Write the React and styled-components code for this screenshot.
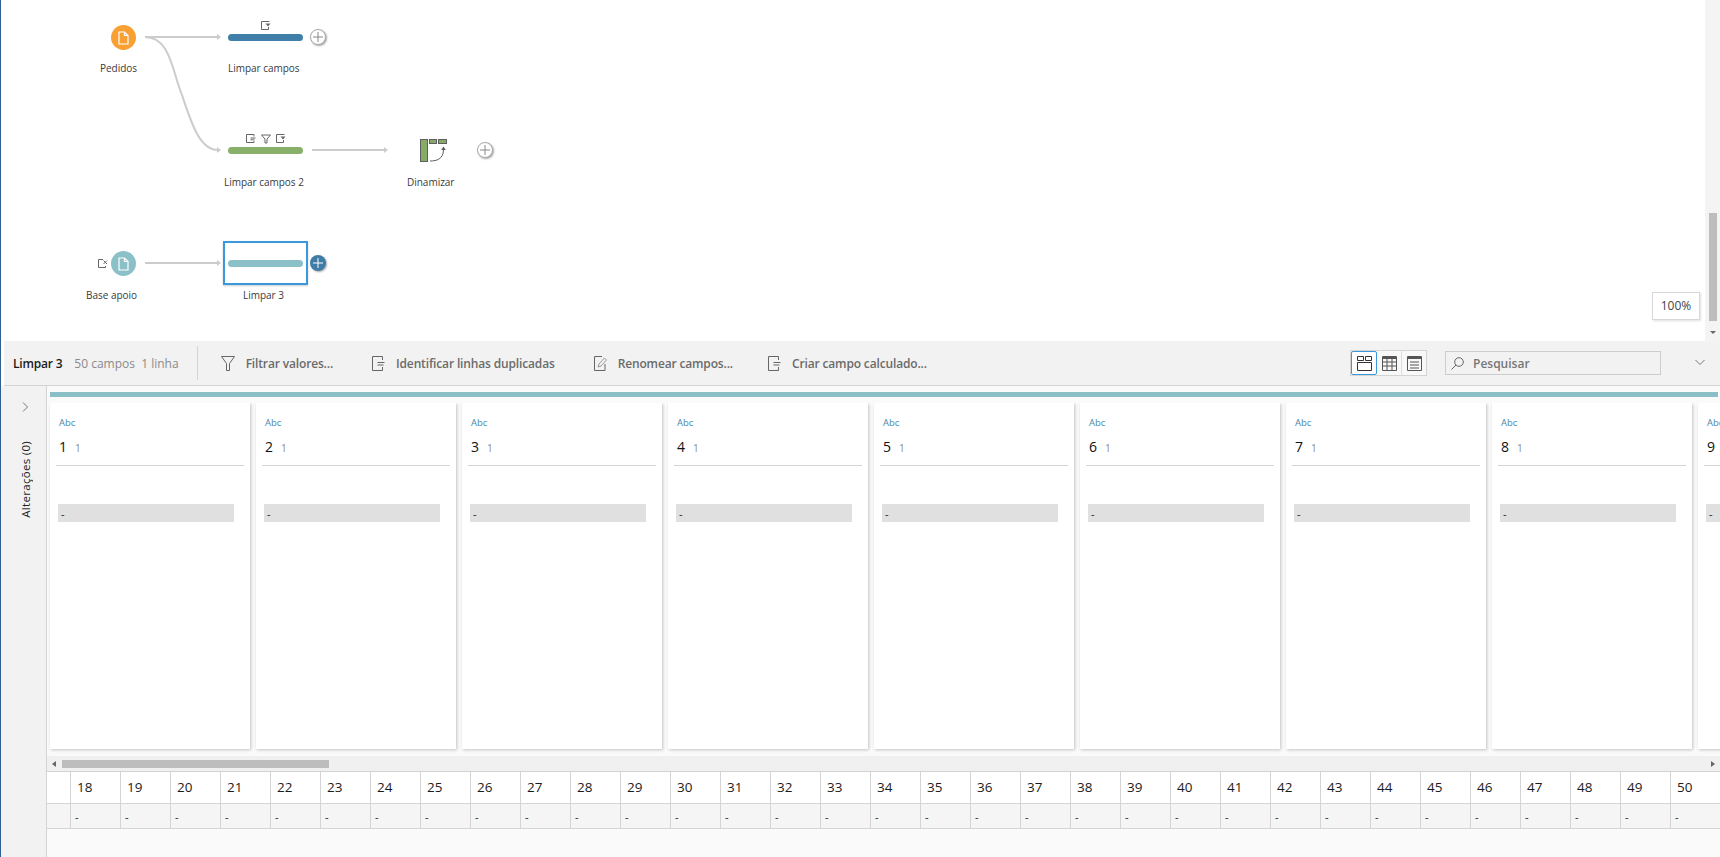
import React from "react";
import styled, { createGlobalStyle } from "styled-components";

const GlobalStyle = createGlobalStyle`
  html, body {
    margin: 0;
    height: 100%;
    overflow: hidden;
    background: white;
  }
  #root {
    height: 100%;
  }
`;

const FONT = `"Open Sans", "Noto Sans", sans-serif`;

const Page = styled.div`
  display: grid;
  grid-template-columns: minmax(0, 1fr);
  grid-template-rows: 341px 45px 1fr;
  box-sizing: border-box;
  height: 100vh;
  border-left: 1px solid #2f5f8f;
  overflow: hidden;
  font-family: ${FONT};
  color: #333;
`;

/* flow canvas */
const CanvasRow = styled.div`
  display: flex;
  min-height: 0;
`;

const Canvas = styled.div`
  position: relative;
  flex: 1;
  background: white;
`;

const Edges = styled.svg`
  position: absolute;
  left: -1px;
  top: 0;
`;

const FlowNode = styled.div`
  position: absolute;
  left: ${(p) => p.$x - 1}px;
  top: ${(p) => p.$y}px;
`;

const Circle = styled(FlowNode)`
  display: flex;
  align-items: center;
  justify-content: center;
  width: 25px;
  height: 25px;
  border-radius: 50%;
  background: ${(p) => p.$color};
`;

const Stripe = styled(FlowNode)`
  width: 75px;
  height: 7px;
  border-radius: 4px;
  background: ${(p) => p.$color};
`;

const Selection = styled(FlowNode)`
  box-sizing: border-box;
  width: 85px;
  height: 44px;
  border: 2px solid #3c98dc;
  box-shadow: 0 1px 2px rgba(0, 0, 0, 0.2);
  background: white;
`;

const NodeLabel = styled(FlowNode)`
  font-size: 10px;
  line-height: 14px;
  letter-spacing: -0.02px;
  white-space: nowrap;
  color: #3a3a3a;
`;

const AddButton = styled(FlowNode)`
  display: flex;
  align-items: center;
  justify-content: center;
  box-sizing: border-box;
  width: 16px;
  height: 16px;
  border-radius: 50%;
  border: ${(p) => (p.$active ? "none" : "1px solid #a8a8a8")};
  background: ${(p) => (p.$active ? "#3f7da6" : "white")};
  box-shadow: 1px 1px 2px rgba(0, 0, 0, 0.35);
`;

const StepIcon = styled(FlowNode)`
  display: flex;
  line-height: 0;
`;

const ZoomBadge = styled.div`
  position: absolute;
  right: 5px;
  bottom: 21px;
  box-sizing: border-box;
  width: 48px;
  height: 28px;
  border: 1px solid #d8d8d8;
  box-shadow: 1px 1px 2px rgba(0, 0, 0, 0.12);
  background: white;
  font-size: 12px;
  line-height: 26px;
  text-align: center;
  color: #444;
`;

const VScrollbar = styled.div`
  display: flex;
  flex-direction: column;
  align-items: center;
  justify-content: flex-end;
  flex-shrink: 0;
  width: 15px;
  padding-bottom: 7px;
  box-sizing: border-box;
  background: #f4f4f4;
`;

const VThumb = styled.div`
  width: 8px;
  height: 108px;
  margin-bottom: 10px;
  background: #bdbdbd;
`;

const DownArrow = styled.div`
  border-left: 3px solid transparent;
  border-right: 3px solid transparent;
  border-top: 3px solid #666;
`;

/* toolbar */
const Toolbar = styled.div`
  display: flex;
  align-items: center;
  box-sizing: border-box;
  margin-left: 3px;
  border-bottom: 1px solid #d4d4d4;
  background: #f2f2f2;
  font-size: 12px;
`;

const StepTitle = styled.div`
  margin-left: 9px;
  font-weight: 600;
  letter-spacing: -0.2px;
  color: #1a1a1a;
  white-space: nowrap;
`;

const StepMeta = styled.div`
  margin-left: 12px;
  color: #8a8a8a;
  white-space: nowrap;
`;

const Separator = styled.div`
  width: 1px;
  height: 34px;
  margin: 0 0 0 18px;
  background: #d4d4d4;
`;

const Action = styled.div`
  display: flex;
  align-items: center;
  gap: 11px;
  margin-left: ${(p) => p.$gap}px;
  font-weight: 600;
  letter-spacing: -0.15px;
  color: #6b6b6b;
  white-space: nowrap;
`;

const ViewSwitch = styled.div`
  display: flex;
  box-sizing: border-box;
  width: 77px;
  height: 26px;
  margin-left: auto;
  border: 1px solid #d4d4d4;
  background: #f8f8f8;
`;

const ViewButton = styled.div`
  display: flex;
  align-items: center;
  justify-content: center;
  box-sizing: border-box;
  flex: 1;
  border: ${(p) => (p.$active ? "1px solid #3c98dc" : "none")};
  border-radius: 2px;
  background: ${(p) => (p.$active ? "white" : "transparent")};
  & + & + & {
    border-left: 1px solid #dcdcdc;
  }
`;

const SearchBox = styled.div`
  display: flex;
  align-items: center;
  gap: 9px;
  box-sizing: border-box;
  flex-shrink: 0;
  width: 216px;
  height: 24px;
  margin-left: 18px;
  padding-left: 5px;
  border: 1px solid #cdcdcd;
  font-size: 12px;
  font-weight: 600;
  color: #777;
`;

const Collapse = styled.div`
  display: flex;
  margin: 0 15px 2px 34px;
`;

/* lower panel */
const Panel = styled.div`
  display: flex;
  min-height: 0;
  min-width: 0;
`;

const Sidebar = styled.div`
  display: flex;
  flex-direction: column;
  align-items: center;
  flex-shrink: 0;
  box-sizing: border-box;
  width: 46px;
  padding: 16px 0 0 4px;
  border-right: 1px solid #d4d4d4;
  background: #f2f2f2;
`;

const SideTitle = styled.div`
  margin-top: 29px;
  writing-mode: vertical-rl;
  transform: rotate(180deg);
  font-size: 11.5px;
  letter-spacing: 0.3px;
  color: #222;
  white-space: nowrap;
`;

const Main = styled.div`
  display: flex;
  flex-direction: column;
  flex: 1;
  min-width: 0;
  overflow: hidden;
  background: #fafafa;
`;

const ColorBar = styled.div`
  flex-shrink: 0;
  height: 5px;
  margin: 6px 2px 6px 3px;
  background: #8abfc8;
`;

const CardRow = styled.div`
  display: flex;
  flex-shrink: 0;
  gap: 6px;
  height: 353px;
  padding-left: 3px;
  overflow: hidden;
`;

const Card = styled.div`
  flex: 0 0 200px;
  box-sizing: border-box;
  height: 346px;
  padding-top: 13px;
  background: white;
  box-shadow: 1px 1px 3px rgba(0, 0, 0, 0.22);
`;

const TypeTag = styled.div`
  margin-left: 9px;
  font-size: 9.5px;
  line-height: 13px;
  color: #4a88aa;
`;

const CardHead = styled.div`
  display: flex;
  align-items: baseline;
  gap: 8px;
  box-sizing: border-box;
  height: 32px;
  margin: 5px 6px 0;
  padding: 3px 0 0 3px;
  border-bottom: 1px solid #d4d4d4;
  font-size: 14px;
  line-height: 20px;
  color: #111;
`;

const CardCount = styled.span`
  font-size: 10px;
  color: #8a8a8a;
`;

const ValueBar = styled.div`
  box-sizing: border-box;
  width: 176px;
  height: 18px;
  margin: 38px 0 0 8px;
  padding-left: 3px;
  background: #e0e0e0;
  font-size: 11px;
  line-height: 19px;
  color: #222;
`;

const HScrollbar = styled.div`
  display: flex;
  align-items: center;
  flex-shrink: 0;
  height: 15px;
  background: #f0f0f0;
`;

const SideArrow = styled.div`
  margin: ${(p) => (p.$right ? "0 5px 0 auto" : "0 6px 0 5px")};
  border-top: 3px solid transparent;
  border-bottom: 3px solid transparent;
  ${(p) => (p.$right ? "border-left: 4px solid #666;" : "border-right: 4px solid #666;")}
`;

const HThumb = styled.div`
  width: 267px;
  height: 8px;
  background: #bdbdbd;
`;

const TableRow = styled.div`
  display: flex;
  flex-shrink: 0;
  height: ${(p) => p.$height}px;
  box-sizing: border-box;
  border-bottom: 1px solid #d4d4d4;
  background: ${(p) => p.$bg};
  ${(p) => p.$top && "border-top: 1px solid #d4d4d4;"}
`;

const RowHead = styled.div`
  flex: 0 0 23px;
`;

const HeadCell = styled.div`
  flex: 0 0 50px;
  box-sizing: border-box;
  padding-left: 6px;
  border-left: 1px solid #d4d4d4;
  font-size: 13.5px;
  line-height: 30px;
  color: #1c1c1c;
`;

const ValueCell = styled.div`
  flex: 0 0 50px;
  box-sizing: border-box;
  padding-left: 4px;
  border-left: 1px solid #d4d4d4;
  font-size: 11px;
  line-height: 25px;
  color: #222;
`;

/* icons */
const Glyph = ({ size = 14, width, box = 14, boxWidth, children, color = "#666" }) => (
  <svg
    width={width || size}
    height={size}
    viewBox={`0 0 ${boxWidth || box} ${box}`}
    fill="none"
    stroke={color}
    strokeWidth="1"
  >
    {children}
  </svg>
);

const FileIcon = () => (
  <svg width="11" height="14" viewBox="0 0 11 14" fill="none" stroke="white" strokeWidth="1.2">
    <path d="M1 1h5.5L10 4.5V13H1z" />
    <path d="M6.5 1v3.5H10" />
  </svg>
);

const FilteredFile = () => (
  <Glyph size={10} box={10}>
    <path d="M8.5 .5H.5v8h7V6" />
    <path d="M4.5 2.5h5L7 5.5z" fill="#666" stroke="none" />
  </Glyph>
);

const RemovedFile = () => (
  <Glyph size={10} box={10}>
    <path d="M5 .5H.5v8h7V7" />
    <path d="M5.5 1.5L9 5M9 1.5L5.5 5" />
  </Glyph>
);

const LinesFile = () => (
  <Glyph size={10} box={10}>
    <path d="M8 2.5V.5H.5v8H8V7" />
    <path d="M4.5 4h5M4.5 5.8h4" />
  </Glyph>
);

const SmallFunnel = () => (
  <Glyph size={10} box={10}>
    <path d="M.5 1h9L6 5v4H4V5z" />
  </Glyph>
);

const FunnelIcon = () => (
  <Glyph size={15} width={14} box={15} boxWidth={14}>
    <path d="M.5 .5h13L8.500 7.500v7h-3v-7z" />
  </Glyph>
);

const LinesDocIcon = () => (
  <Glyph size={15} width={13} box={15} boxWidth={13}>
    <path d="M10.500 4V.5H.5v14h10V11" />
    <path d="M5.500 6.500h7M5.500 9h6" />
  </Glyph>
);

const RenameIcon = () => (
  <Glyph size={15} width={13} box={15} boxWidth={13}>
    <path d="M8 .5H.5v14H11V8" />
    <path d="M4 11l1-3 5.500-6 2 2-5.500 6z" stroke="#999" />
  </Glyph>
);

const MagnifierIcon = () => (
  <Glyph size={13} box={13}>
    <circle cx="8" cy="5" r="4.300" />
    <path d="M5 8L.5 12.500" />
  </Glyph>
);

const ChevronRight = () => (
  <svg width="7" height="10" viewBox="0 0 7 10" fill="none" stroke="#777" strokeWidth="1">
    <path d="M1 .5L5.500 5 1 9.500" />
  </svg>
);

const ChevronDown = () => (
  <svg width="10" height="7" viewBox="0 0 10 7" fill="none" stroke="#777" strokeWidth="1">
    <path d="M.5 1L5 5.500 9.500 1" />
  </svg>
);

const Plus = ({ color }) => (
  <svg width="10" height="10" viewBox="0 0 10 10" stroke={color} strokeWidth="1">
    <path d="M5 0v10M0 5h10" />
  </svg>
);

const CardsView = () => (
  <Glyph size={15} box={15} color="#333">
    <path d="M.5 .5h6v4h-6zM8.500 .5h6v4h-6zM.5 6.500h14v8h-14z" />
  </Glyph>
);

const TableView = () => (
  <Glyph size={15} box={15} color="#555">
    <path d="M.5 .5h14v14h-14z" />
    <path d="M.5 2h14" strokeWidth="2" />
    <path d="M.5 6h14M.5 10h14M5 3v11M10 3v11" />
  </Glyph>
);

const ListView = () => (
  <Glyph size={15} box={15} color="#555">
    <path d="M.5 .5h14v14h-14z" />
    <path d="M.5 2h14" strokeWidth="2" />
    <path d="M3 6h9M3 9h9M3 12h9" />
  </Glyph>
);

const PivotIcon = () => (
  <svg width="28" height="24" viewBox="0 0 28 24" fill="none">
    <rect x=".5" y=".5" width="7" height="22" fill="#86ab68" stroke="#5f5f5f" />
    <rect x="9.500" y=".5" width="7" height="4" fill="#86ab68" stroke="#5f5f5f" />
    <rect x="18.500" y=".5" width="8" height="4" fill="#86ab68" stroke="#5f5f5f" />
    <path d="M10 22C17 22 23 20 23.500 11" stroke="#5f5f5f" strokeWidth="1" />
    <path d="M23.500 7.500l2.300 3.500h-4.600z" fill="#5f5f5f" />
  </svg>
);

const Edge = ({ d, tipX, tipY }) => (
  <>
    <path d={d} stroke="#cccccc" strokeWidth="2" fill="none" />
    <path d={`M${tipX} ${tipY}l-4-3v6z`} fill="#cccccc" />
  </>
);

const CARDS = [1, 2, 3, 4, 5, 6, 7, 8, 9];
const COLUMNS = Array.from({ length: 33 }, (_, i) => i + 18);

const App = () => {
  return (
    <Page>
      <GlobalStyle />
      <CanvasRow>
        <Canvas>
          <Edges width="520" height="320">
            <Edge d="M145 37H218" tipX={221} tipY={37} />
            <Edge d="M145 37C170 37 172 70 182 95C192 125 200 150 218 150" tipX={221} tipY={150} />
            <Edge d="M312 150H385" tipX={388} tipY={150} />
            <Edge d="M145 263H218" tipX={221} tipY={263} />
          </Edges>

          <Circle $x={111} $y={25} $color="#f8a034"><FileIcon /></Circle>
          <NodeLabel $x={100} $y={61}>Pedidos</NodeLabel>

          <StepIcon $x={261} $y={21}><FilteredFile /></StepIcon>
          <Stripe $x={228} $y={34} $color="#3f7faa" />
          <AddButton $x={310} $y={29}><Plus color="#888" /></AddButton>
          <NodeLabel $x={228} $y={61}>Limpar campos</NodeLabel>

          <StepIcon $x={246} $y={134}><LinesFile /></StepIcon>
          <StepIcon $x={261} $y={134}><SmallFunnel /></StepIcon>
          <StepIcon $x={276} $y={134}><FilteredFile /></StepIcon>
          <Stripe $x={228} $y={147} $color="#88b06b" />
          <NodeLabel $x={224} $y={175}>Limpar campos 2</NodeLabel>

          <StepIcon $x={420} $y={139}><PivotIcon /></StepIcon>
          <AddButton $x={477} $y={142}><Plus color="#888" /></AddButton>
          <NodeLabel $x={407} $y={175}>Dinamizar</NodeLabel>

          <StepIcon $x={98} $y={259}><RemovedFile /></StepIcon>
          <Circle $x={111} $y={251} $color="#8cc0c9"><FileIcon /></Circle>
          <NodeLabel $x={86} $y={288}>Base apoio</NodeLabel>

          <Selection $x={223} $y={241} />
          <Stripe $x={228} $y={260} $color="#8cc0c9" />
          <AddButton $x={310} $y={255} $active><Plus color="white" /></AddButton>
          <NodeLabel $x={243} $y={288}>Limpar 3</NodeLabel>

          <ZoomBadge>100%</ZoomBadge>
        </Canvas>
        <VScrollbar>
          <VThumb />
          <DownArrow />
        </VScrollbar>
      </CanvasRow>

      <Toolbar>
        <StepTitle>Limpar 3</StepTitle>
        <StepMeta>50 campos&nbsp;&nbsp;1 linha</StepMeta>
        <Separator />
        <Action $gap={23}><FunnelIcon />Filtrar valores...</Action>
        <Action $gap={39}><LinesDocIcon />Identificar linhas duplicadas</Action>
        <Action $gap={39}><RenameIcon />Renomear campos...</Action>
        <Action $gap={35}><LinesDocIcon />Criar campo calculado...</Action>
        <ViewSwitch>
          <ViewButton $active><CardsView /></ViewButton>
          <ViewButton><TableView /></ViewButton>
          <ViewButton><ListView /></ViewButton>
        </ViewSwitch>
        <SearchBox><MagnifierIcon />Pesquisar</SearchBox>
        <Collapse><ChevronDown /></Collapse>
      </Toolbar>

      <Panel>
        <Sidebar>
          <ChevronRight />
          <SideTitle>Alterações (0)</SideTitle>
        </Sidebar>
        <Main>
          <ColorBar />
          <CardRow>
            {CARDS.map((n) => (
              <Card key={n}>
                <TypeTag>Abc</TypeTag>
                <CardHead>
                  {n}
                  <CardCount>1</CardCount>
                </CardHead>
                <ValueBar>-</ValueBar>
              </Card>
            ))}
          </CardRow>
          <HScrollbar>
            <SideArrow />
            <HThumb />
            <SideArrow $right />
          </HScrollbar>
          <TableRow $height={33} $bg="white" $top>
            <RowHead />
            {COLUMNS.map((n) => <HeadCell key={n}>{n}</HeadCell>)}
          </TableRow>
          <TableRow $height={25} $bg="#f5f5f5">
            <RowHead />
            {COLUMNS.map((n) => <ValueCell key={n}>-</ValueCell>)}
          </TableRow>
        </Main>
      </Panel>
    </Page>
  );
};

export default App;
